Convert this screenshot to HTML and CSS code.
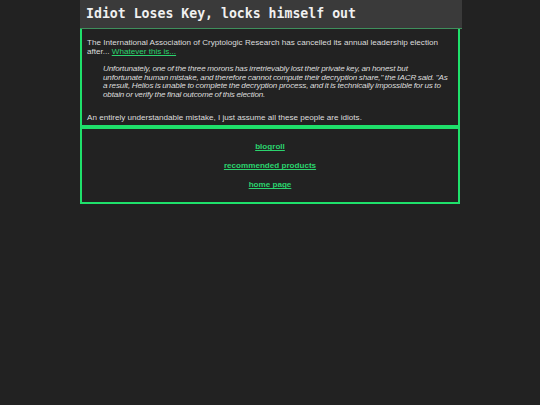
FILE: index.html
```html
<!DOCTYPE html>
<html>
<head>
<meta charset="utf-8">
<link rel="stylesheet" href="styles.css">
</head>
<body>
<div class="page">
  <header class="top">
    <h1 class="title">Idiot Loses Key, locks himself out</h1>
  </header>
  <article class="box post">
    <p class="para">The International Association of Cryptologic Research has cancelled its annual leadership election after... <a class="link" href="#">Whatever this is...</a></p>
    <blockquote class="quote">Unfortunately, one of the three morons has irretrievably lost their private key, an honest but<br>unfortunate human mistake, and therefore cannot compute their decryption share," the IACR said. "As<br>a result, Helios is unable to complete the decryption process, and it is technically impossible for us to<br>obtain or verify the final outcome of this election.</blockquote>
    <p class="para last">An entirely understandable mistake, I just assume all these people are idiots.</p>
  </article>
  <nav class="box nav">
    <a class="navlink" href="#">blogroll</a>
    <a class="navlink" href="#">recommended products</a>
    <a class="navlink" href="#">home page</a>
  </nav>
</div>
</body>
</html>
```
FILE: styles.css
```css
html, body {
  margin: 0;
  padding: 0;
  background: #222222;
}
body {
  font-family: "Liberation Sans", Arial, sans-serif;
  font-size: 8.1px;
  color: #dddddd;
}
.page {
  width: 380px;
  margin: 0 auto;
}
.top {
  background: #3a3a3a;
  border-bottom: 1px solid #3f8f5c;
  margin-right: -2px;
  height: 28px;
  display: flex;
  align-items: center;
  padding-left: 6px;
}
.title {
  margin: 0 0 1px 0;
  font-family: "DejaVu Sans Mono", monospace;
  font-size: 13.2px;
  font-weight: bold;
  color: #f0f0f0;
}
.box {
  border: 2px solid #1fe06b;
}
.post {
  border-top: none;
  padding: 9px 2px 3px 5px;
}
.para {
  margin: 0 0 8px 0;
  line-height: 9.4px;
}
.para.last {
  margin-bottom: 0;
}
.link {
  color: #2bd46e;
}
.quote {
  margin: 0 -2px 13px 16px;
  font-size: 8.1px;
  font-style: italic;
  letter-spacing: -0.15px;
  word-spacing: -0.4px;
  line-height: 8.8px;
  white-space: nowrap;
}
.nav {
  display: flex;
  flex-direction: column;
  align-items: center;
  gap: 10px;
  padding: 13px 0 13px;
}
.navlink {
  color: #2bd46e;
  font-weight: bold;
  line-height: 9px;
}
```
